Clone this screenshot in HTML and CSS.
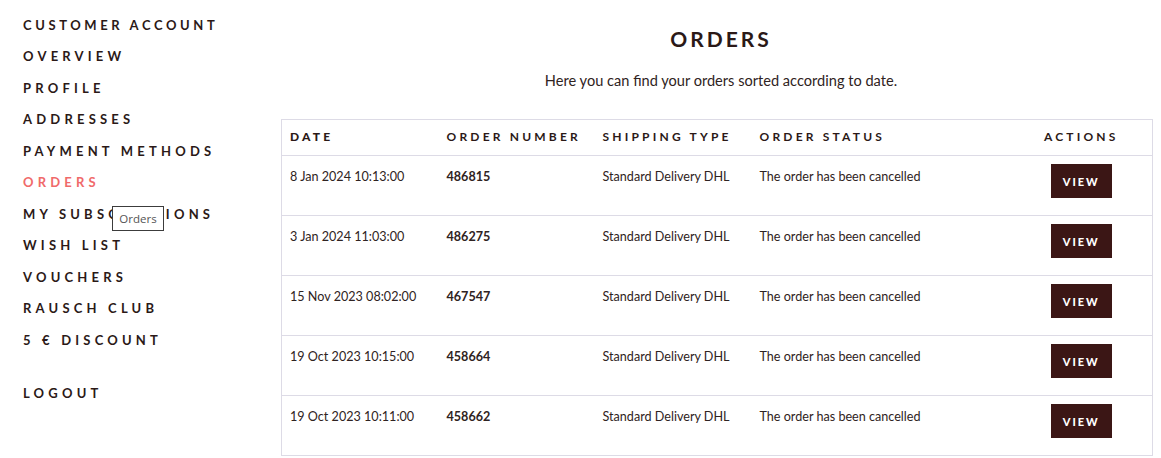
FILE: index.html
```html
<!DOCTYPE html>
<html lang="en">
<head>
<meta charset="utf-8">
<title>Orders</title>
<link rel="stylesheet" href="styles.css">
</head>
<body>
<div class="page">
  <aside class="sidebar">
    <div class="nav-title">Customer Account</div>
    <nav class="nav">
      <a class="nav-item" href="#">Overview</a>
      <a class="nav-item" href="#">Profile</a>
      <a class="nav-item" href="#">Addresses</a>
      <a class="nav-item" href="#">Payment Methods</a>
      <a class="nav-item active" href="#">Orders</a>
      <a class="nav-item" href="#">My Subscriptions</a>
      <a class="nav-item" href="#">Wish List</a>
      <a class="nav-item" href="#">Vouchers</a>
      <a class="nav-item" href="#">Rausch Club</a>
      <a class="nav-item" href="#">5 € Discount</a>
      <a class="nav-item logout" href="#">Logout</a>
    </nav>
    <div class="tooltip">Orders</div>
  </aside>
  <main class="main">
    <h1 class="title">Orders</h1>
    <p class="subtitle">Here you can find your orders sorted according to date.</p>
    <table class="orders">
      <colgroup>
        <col class="c-date"><col class="c-num"><col class="c-ship"><col class="c-status"><col class="c-act">
      </colgroup>
      <thead>
        <tr>
          <th class="strong">Date</th>
          <th>Order Number</th>
          <th>Shipping Type</th>
          <th>Order Status</th>
          <th class="center">Actions</th>
        </tr>
      </thead>
      <tbody>
        <tr><td>8 Jan 2024 10:13:00</td><td class="num">486815</td><td>Standard Delivery DHL</td><td>The order has been cancelled</td><td class="action"><button class="btn">View</button></td></tr>
        <tr><td>3 Jan 2024 11:03:00</td><td class="num">486275</td><td>Standard Delivery DHL</td><td>The order has been cancelled</td><td class="action"><button class="btn">View</button></td></tr>
        <tr><td>15 Nov 2023 08:02:00</td><td class="num">467547</td><td>Standard Delivery DHL</td><td>The order has been cancelled</td><td class="action"><button class="btn">View</button></td></tr>
        <tr><td>19 Oct 2023 10:15:00</td><td class="num">458664</td><td>Standard Delivery DHL</td><td>The order has been cancelled</td><td class="action"><button class="btn">View</button></td></tr>
        <tr><td>19 Oct 2023 10:11:00</td><td class="num">458662</td><td>Standard Delivery DHL</td><td>The order has been cancelled</td><td class="action"><button class="btn">View</button></td></tr>
      </tbody>
    </table>
  </main>
</div>
</body>
</html>
```
FILE: styles.css
```css
* { box-sizing: border-box; }
html, body { margin: 0; padding: 0; background: #fff; }
body {
  font-family: Lato, "Open Sans", sans-serif;
  color: #2f2322;
  overflow: hidden;
}
.page {
  display: flex;
  align-items: flex-start;
}
.sidebar {
  position: relative;
  width: 281px;
  flex: none;
  padding: 9.5px 0 0 23px;
}
.nav-title, .nav-item {
  display: block;
  font-family: Lato, "Liberation Sans", sans-serif;
  font-size: 13px;
  line-height: 31.5px;
  text-transform: uppercase;
  color: #2b1917;
  text-decoration: none;
  white-space: nowrap;
}
.nav-title { font-weight: 700; letter-spacing: 3.6px; }
.nav-item { font-weight: 700; letter-spacing: 4.2px; }
.nav-item.active { color: #f06a6a; }
.nav-item.logout { margin-top: 21.5px; }
.nav { display: flex; flex-direction: column; }
.tooltip {
  position: absolute;
  left: 112px;
  top: 206px;
  width: 52px;
  height: 25px;
  border: 1px solid #3c3c3c;
  background: #fff;
  font-family: "Open Sans", "Noto Sans", sans-serif;
  font-size: 11.5px;
  line-height: 23px;
  text-align: center;
  color: #555;
}
.main {
  flex: 1;
  padding: 0 9px 0 0;
}
.title {
  margin: 26px 0 0 8px;
  text-align: center;
  font-family: Lato, "Liberation Sans", sans-serif;
  font-weight: 700;
  font-size: 21px;
  line-height: 26px;
  letter-spacing: 3px;
  text-transform: uppercase;
  color: #2b1917;
}
.subtitle {
  margin: 19px 0 0 8px;
  text-align: center;
  font-size: 14.6px;
  line-height: 20px;
  color: #2f2322;
}
.orders {
  margin-top: 28px;
  width: 871px;
  table-layout: fixed;
  border-collapse: collapse;
  border: 1px solid #dddbe6;
}
.c-date { width: 157px; }
.c-num { width: 156px; }
.c-ship { width: 157px; }
.c-status { width: 259px; }
.c-act { width: 142px; }
.orders th {
  height: 36px;
  padding: 0 9px 3px 8px;
  text-align: left;
  font-family: Lato, "Liberation Sans", sans-serif;
  font-weight: 700;
  font-size: 12px;
  letter-spacing: 3.2px;
  text-transform: uppercase;
  color: #2b1917;
  border-bottom: 1px solid #dddbe6;
  white-space: nowrap;
}
.orders th.strong { font-weight: 900; }
.orders th.center { text-align: center; padding-left: 0; padding-right: 0; }
.orders td {
  height: 60px;
  padding: 11px 9px 0 8px;
  vertical-align: top;
  font-size: 12.6px;
  line-height: 20px;
  color: #2f2322;
  border-bottom: 1px solid #dddbe6;
  white-space: nowrap;
}
.orders td.num { font-weight: 700; }
.orders td.action { text-align: center; padding: 8px 0 0; }
.btn {
  display: inline-block;
  vertical-align: top;
  width: 61px;
  height: 34px;
  border: 0;
  padding: 0;
  background: #3b1615;
  color: #fff;
  font-family: Lato, "Liberation Sans", sans-serif;
  font-weight: 900;
  font-size: 11px;
  letter-spacing: 2px;
  text-transform: uppercase;
  cursor: pointer;
}
```
